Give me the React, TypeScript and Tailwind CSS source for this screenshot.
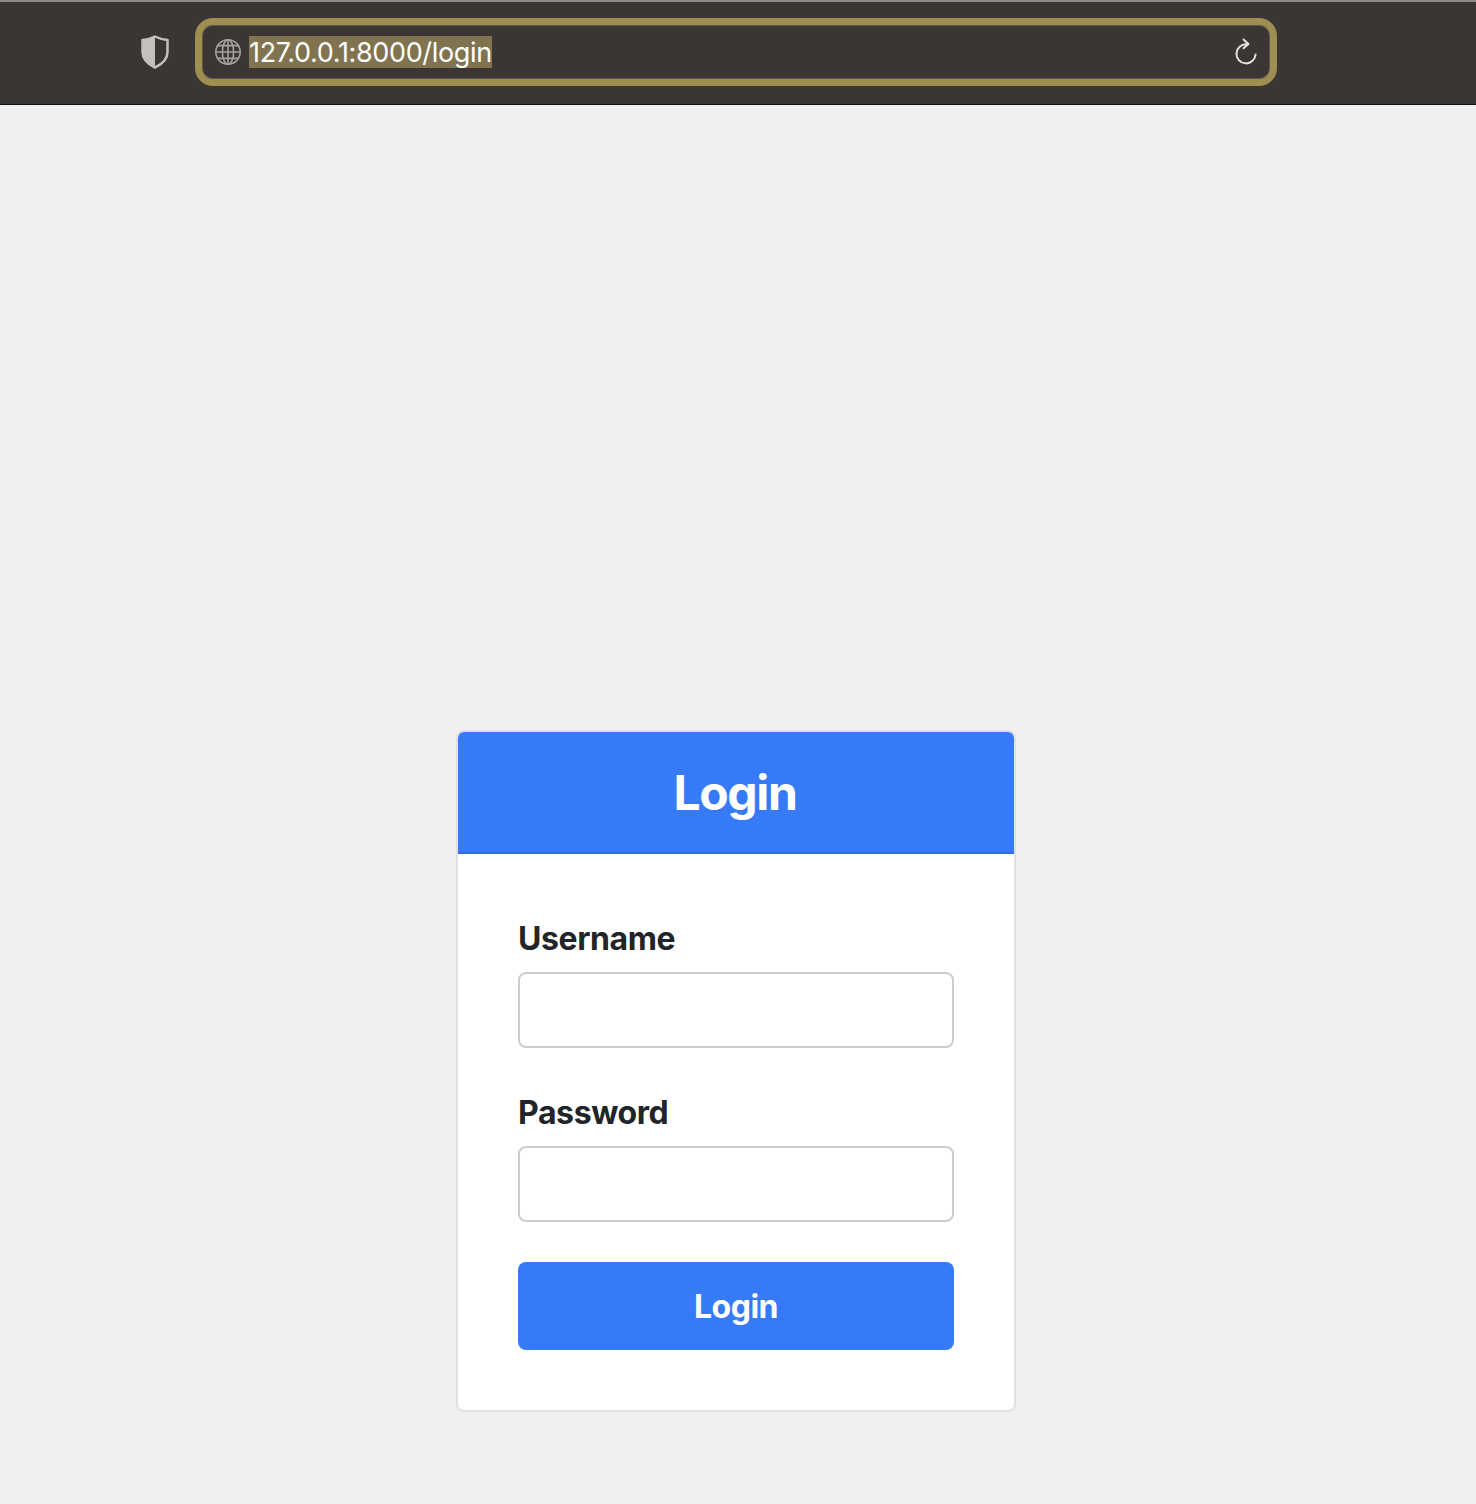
import { useState } from "react";

const FONT = "font-['Inter','Liberation_Sans',sans-serif]";

function ShieldIcon() {
  return (
    <svg width="30" height="36" viewBox="0 0 30 36" aria-hidden>
      <path
        d="M15 2.5 C19 4.5 23 5.5 27.5 6 V18 C27.5 25 22.5 30 15 33.5 C7.5 30 2.5 25 2.5 18 V6 C7 5.5 11 4.5 15 2.5 Z"
        fill="none"
        stroke="#c4c0bd"
        strokeWidth="2.5"
        strokeLinejoin="round"
      />
      <path
        d="M15 2.5 V33.5 C7.5 30 2.5 25 2.5 18 V6 C7 5.5 11 4.5 15 2.5 Z"
        fill="#c4c0bd"
      />
    </svg>
  );
}

function GlobeIcon() {
  return (
    <svg width="28" height="28" viewBox="0 0 28 28" fill="none" stroke="#a5a2a0" strokeWidth="1.6" aria-hidden>
      <circle cx="14" cy="14" r="12.2" />
      <ellipse cx="14" cy="14" rx="5.6" ry="12.2" />
      <path d="M14 1.8 V26.2 M1.8 14 H26.2 M3.8 7.6 H24.2 M3.8 20.4 H24.2" />
    </svg>
  );
}

function ReloadIcon() {
  return (
    <svg width="24" height="28" viewBox="0 0 24 28" fill="none" stroke="#e6e4e2" strokeWidth="2" strokeLinecap="round" strokeLinejoin="round" aria-hidden>
      <path d="M12.5 6.2 A9.6 9.6 0 1 0 21.6 16.5" />
      <path d="M9.5 1.5 L14.5 6 L9.5 10.2" />
    </svg>
  );
}

function BrowserBar() {
  return (
    <header className="h-[105px] bg-[#3b3633] border-t-2 border-t-[#8c8a88] border-b border-b-[#111111] flex items-center">
      <div className="ml-[140px] w-[30px] flex justify-center -mt-[3px]">
        <ShieldIcon />
      </div>
      <div className="ml-[25px] w-[1082px] h-[68px] -mt-[3px] rounded-[18px] border-[7px] border-[#9e8f50] flex items-center pl-[12px] pr-[12px] shadow-[inset_0_0_0_1px_#5c5957]">
        <GlobeIcon />
        <span className="ml-[7px] h-[32px] leading-[34px] text-[27px] tracking-[-0.35px] text-white bg-[#7f7350] font-normal">
          127.0.0.1:8000/login
        </span>
        <div className="ml-auto flex">
          <ReloadIcon />
        </div>
      </div>
    </header>
  );
}

function Field({ label, type }: { label: string; type: string }) {
  const [value, setValue] = useState("");
  return (
    <div className="mb-10">
      <label className="block h-[48px] mb-[10px] text-[32px] leading-[50px] font-bold tracking-[-0.4px] text-[#212529]">
        {label}
      </label>
      <input
        type={type}
        value={value}
        onChange={(e) => setValue(e.target.value)}
        className="block w-full h-[76px] rounded-lg border-2 border-[#cccccc] bg-white px-6 text-[32px] outline-none"
      />
    </div>
  );
}

export default function App() {
  return (
    <div className={`min-h-[1504px] bg-[#f0f0f0] ${FONT}`}>
      <BrowserBar />
      <main className="flex justify-center pt-[625px] pr-1">
        <div className="w-[560px] h-[682px] bg-white rounded-lg border-2 border-[#e0e0e0] overflow-hidden">
          <div className="h-[122px] bg-[#377af8] border-b-2 border-b-[#2f6ad8] flex items-center justify-center pt-[1px] pr-[2px]">
            <h1 className="text-[48px] font-bold tracking-[-1.4px] text-white">Login</h1>
          </div>
          <form className="p-[60px]" onSubmit={(e) => e.preventDefault()}>
            <Field label="Username" type="text" />
            <Field label="Password" type="password" />
            <button
              type="submit"
              className="block w-full h-[88px] rounded-lg bg-[#377af8] pt-[2px] text-[32px] font-bold tracking-[-0.5px] text-white"
            >
              Login
            </button>
          </form>
        </div>
      </main>
    </div>
  );
}
